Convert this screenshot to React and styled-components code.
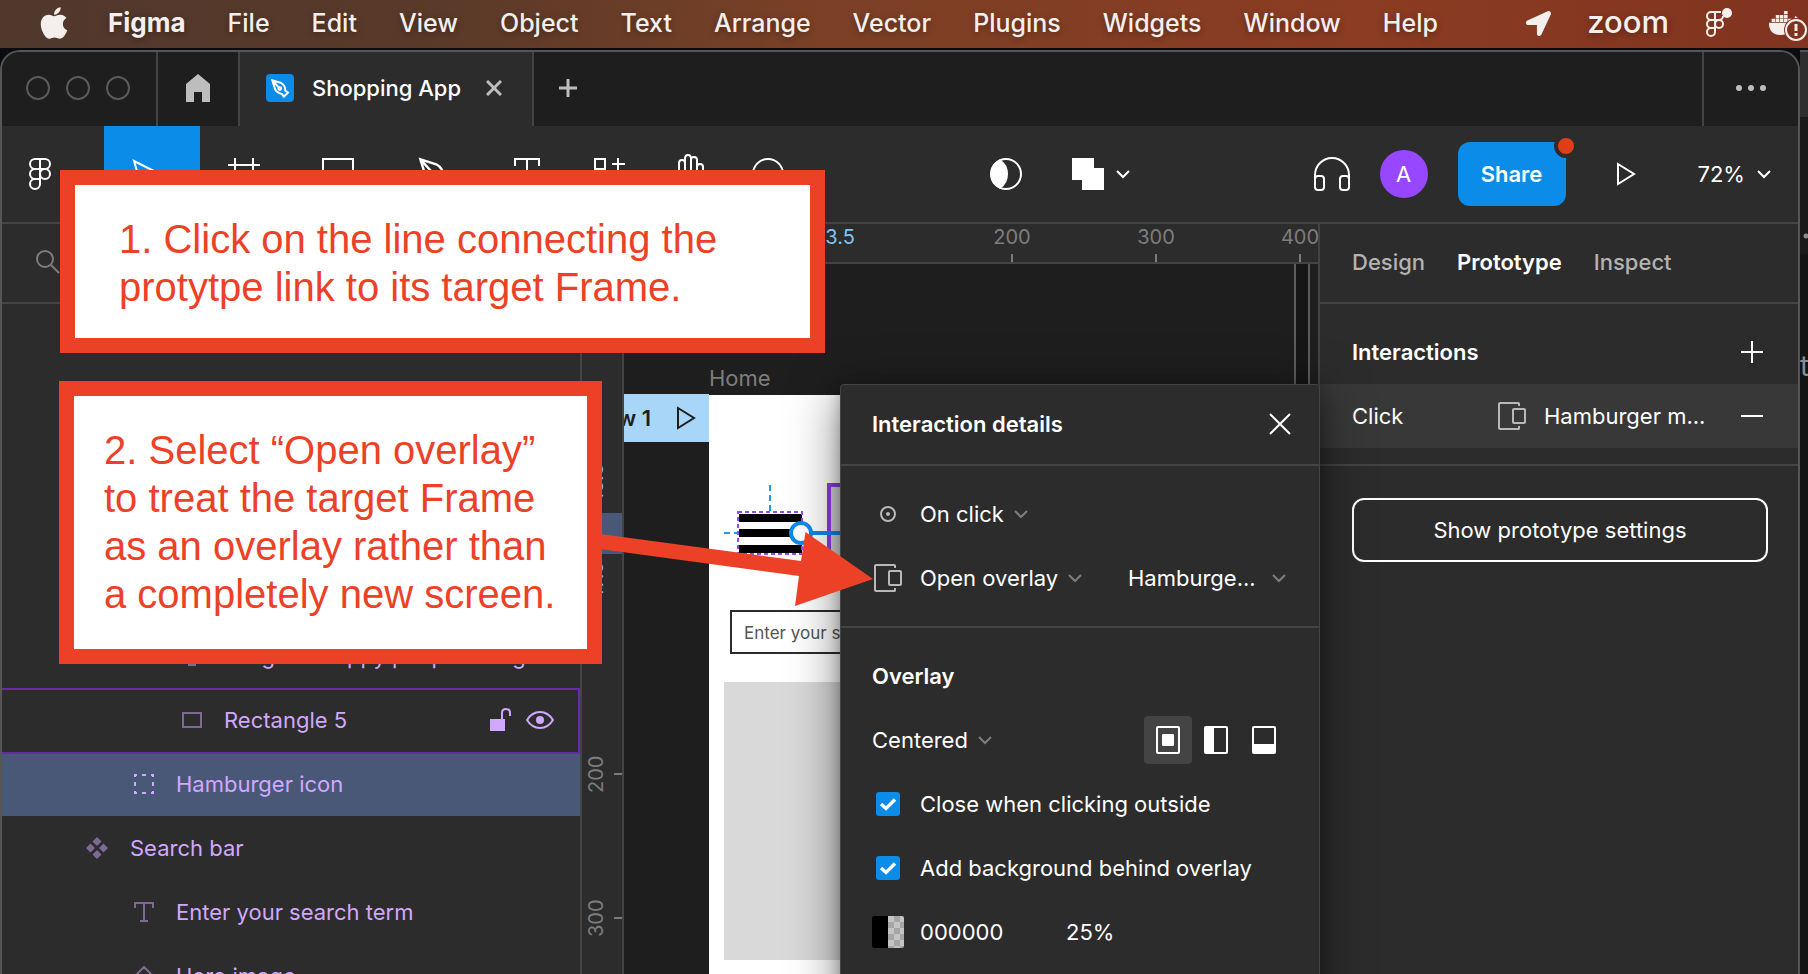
import React, { useState } from 'react';
import styled, { createGlobalStyle } from 'styled-components';
import { FaApple, FaDocker, FaLocationArrow } from 'react-icons/fa';

const GlobalStyle = createGlobalStyle`
  * {
    box-sizing: border-box;
  }

  html, body {
    margin: 0;
    height: 100%;
    overflow: hidden;
    background-color: #151515;
  }

  body, button, input, select {
    font-family: Inter, 'Liberation Sans', sans-serif;
    font-size: 22px;
    line-height: 32px;
  }

  button {
    margin: 0;
    padding: 0;
    border: 0;
    background: none;
    color: inherit;
    cursor: default;
  }

  svg {
    display: block;
    flex: none;
  }
`;

const Desktop = styled.div`
  display: flex;
  flex-direction: column;
  height: 100vh;
  position: relative;
  overflow: hidden;
  color: #fff;
`;

/* ---- mac menu bar ---- */

const MenuBar = styled.nav`
  display: flex;
  align-items: center;
  flex: none;
  height: 48px;
  padding-bottom: 2px;
  padding-left: 36px;
  background: linear-gradient(90deg, #50382d 0%, #5a3a29 25%, #7a4026 45%, #8b3c22 75%, #80331f 100%);
  color: #f4efec;
  text-shadow: 0 2px 6px rgba(0, 0, 0, 0.35);
`;

const Menus = styled.div`
  display: flex;
  gap: 42px;
  margin-left: 36px;
`;

const MenuItem = styled.button`
  font-size: ${(props) => (props.$bold ? 26 : 25)}px;
  font-weight: ${(props) => (props.$bold ? 700 : 500)};
  text-shadow: inherit;
`;

const StatusItems = styled.div`
  display: flex;
  align-items: center;
  gap: 36px;
  margin-left: auto;
`;

const ZoomMark = styled.span`
  font-size: 31px;
  font-weight: 500;
  line-height: 40px;
  padding-bottom: 2px;
`;

const DockerStatus = styled.span`
  position: relative;
  display: block;
  width: 39px;
  height: 46px;
  padding-top: 6px;
`;

const DockerAlert = styled.svg`
  position: absolute;
  left: 15px;
  bottom: 4px;
`;

/* ---- window ---- */

const Backdrop = styled.div`
  flex: 1;
  min-height: 0;
  display: flex;
  padding-top: 2px;
  background-color: #0a0c10;
`;

const Behind = styled.div`
  flex: none;
  width: 8px;
  overflow: hidden;
  padding-top: 298px;
  border-top: 2px solid #555;
  background:
    radial-gradient(circle at 6px 184px, #8c8c8c 2px, transparent 3px),
    linear-gradient(#2e2e2e 0 65px, #1a1a1a 65px 202px, #131313 202px);
  color: #8c8c8c;
  font-size: 28px;
`;

const Window = styled.div`
  flex: 1;
  min-width: 0;
  display: flex;
  flex-direction: column;
  border: 2px solid #565656;
  border-bottom: 0;
  border-radius: 20px 20px 0 0;
  overflow: hidden;
  background-color: #2c2c2c;
`;

const TabBar = styled.div`
  display: flex;
  flex: none;
  height: 74px;
  background-color: #1e1e1e;
  color: #bdbdbd;

  & > * {
    padding-bottom: 2px;
  }
`;

const TrafficLights = styled.div`
  display: flex;
  align-items: center;
  gap: 16px;
  padding-right: 26px;
  padding-left: 24px;
  border-right: 2px solid #444;
`;

const Light = styled.span`
  width: 24px;
  height: 24px;
  border: 2px solid #5a5a5a;
  border-radius: 50%;
`;

const HomeTab = styled.button`
  display: flex;
  align-items: center;
  justify-content: center;
  width: 82px;
  border-right: 2px solid #444;
`;

const FileTab = styled.div`
  display: flex;
  align-items: center;
  width: 294px;
  padding-left: 26px;
  border-right: 2px solid #444;
  background-color: #2c2c2c;
  color: #fff;
  font-weight: 500;
`;

const FileIcon = styled.span`
  display: flex;
  align-items: center;
  justify-content: center;
  width: 28px;
  height: 28px;
  margin-right: 18px;
  border-radius: 4px;
  background-color: #0c8ce9;
`;

const TabClose = styled.button`
  margin-left: 25px;
  color: #bdbdbd;
`;

const NewTab = styled.button`
  padding-left: 25px;
`;

const TabMore = styled.button`
  width: 96px;
  margin-left: auto;
  display: flex;
  align-items: center;
  justify-content: center;
  border-left: 2px solid #444;
`;

const Toolbar = styled.div`
  display: flex;
  justify-content: space-between;
  flex: none;
  height: 98px;
  border-bottom: 2px solid #444;
`;

const ToolGroup = styled.div`
  display: flex;
  align-items: center;
`;

const Tool = styled.button`
  display: flex;
  align-items: center;
  height: 96px;
  width: ${(props) => props.$width || 80}px;
  padding-left: ${(props) => props.$pad || 26}px;
  background-color: ${(props) => (props.$active ? '#0c8ce9' : 'transparent')};
  gap: 12px;
`;

const Avatar = styled.span`
  display: flex;
  align-items: center;
  justify-content: center;
  width: 48px;
  height: 48px;
  margin-right: 30px;
  border-radius: 50%;
  background-color: #9747ff;
`;

const ShareButton = styled.button`
  position: relative;
  width: 108px;
  height: 64px;
  border-radius: 12px;
  background-color: #0c8ce9;
  font-weight: 600;
`;

const ShareDot = styled.span`
  position: absolute;
  top: -8px;
  right: -12px;
  width: 24px;
  height: 24px;
  border: 4px solid #2c2c2c;
  border-radius: 50%;
  background-color: #e03e1a;
`;

const PlayButton = styled.button`
  margin: 0 62px 0 50px;
`;

const ZoomLevel = styled.button`
  display: flex;
  align-items: center;
  gap: 12px;
  padding-right: 27px;
`;

const Body = styled.div`
  display: flex;
  flex: 1;
  min-height: 0;
`;

/* ---- layers ---- */

const LayersPanel = styled.aside`
  flex: none;
  width: 580px;
  border-right: 2px solid #444;
  overflow: hidden;
`;

const SearchRow = styled.div`
  display: flex;
  align-items: center;
  height: 80px;
  padding-bottom: 2px;
  padding-left: 34px;
  border-bottom: 2px solid #444;
`;

const LayerList = styled.div`
  padding-top: 320px;
`;

const LayerRow = styled.div`
  display: flex;
  align-items: center;
  position: relative;
  height: 64px;
  padding-right: 26px;
  padding-left: ${(props) => 36 + props.$depth * 48}px;
  background-color: ${(props) => (props.$selected ? '#4a5878' : 'transparent')};
  color: #d1a8ff;

  & > svg {
    margin-right: 22px;
    opacity: ${(props) => (props.$selected ? 1 : 0.5)};
  }
`;

const HoverOutline = styled.span`
  position: absolute;
  inset: 0 0 -2px 0;
  z-index: 1;
  border: 2px solid #652ca8;
  border-left: 0;
`;

const LayerName = styled.span`
  flex: 1;
  min-width: 0;
  overflow: hidden;
  white-space: nowrap;
`;

const LayerActions = styled.span`
  display: flex;
  align-items: center;
  gap: 14px;
`;

/* ---- canvas ---- */

const CanvasArea = styled.main`
  flex: 1;
  min-width: 0;
  display: grid;
  grid-template-columns: 42px 1fr;
  grid-template-rows: 40px 1fr;
  font-size: 20px;
`;

const RulerTop = styled.div`
  grid-column: 1 / 3;
  position: relative;
  overflow: hidden;
  border-bottom: 2px solid #444;
`;

const RulerLeft = styled.div`
  position: relative;
  overflow: hidden;
  border-right: 2px solid #444;
`;

const TopMark = styled.span`
  position: absolute;
  left: ${(props) => props.$at - 40}px;
  width: 80px;
  height: 38px;
  line-height: 26px;
  text-align: center;
  color: ${(props) => (props.$blue ? '#7cc4f8' : '#7d7d7d')};

  &::after {
    content: '';
    display: ${(props) => (props.$blue ? 'none' : 'block')};
    position: absolute;
    left: 39px;
    bottom: 0;
    width: 2px;
    height: 8px;
    background-color: #7d7d7d;
  }
`;

const LeftMark = styled.span`
  position: absolute;
  top: ${(props) => props.$at - 40}px;
  left: 0;
  width: 40px;
  height: 80px;
  line-height: 28px;
  writing-mode: vertical-rl;
  transform: rotate(180deg);
  text-align: center;
  color: ${(props) => (props.$blue ? '#7cc4f8' : '#7d7d7d')};

  &::after {
    content: '';
    display: ${(props) => (props.$blue ? 'none' : 'block')};
    position: absolute;
    top: 39px;
    left: 0;
    width: 8px;
    height: 2px;
    background-color: #7d7d7d;
  }
`;

const RulerRange = styled.span`
  position: absolute;
  top: 249px;
  left: 0;
  width: 40px;
  height: 41px;
  background-color: #4a5878;
`;

const Canvas = styled.div`
  position: relative;
  overflow: hidden;
  background-color: #1e1e1e;
`;

const FrameName = styled.span`
  position: absolute;
  left: 85px;
  top: 98px;
  color: #7d7d7d;
  font-size: 22px;
`;

const FlowTag = styled.div`
  position: absolute;
  right: calc(100% - 85px);
  top: 130px;
  display: flex;
  align-items: center;
  gap: 25px;
  height: 48px;
  padding-right: 13px;
  background-color: #a8d6f9;
  color: #1e1e1e;
  font-size: 22px;
  font-weight: 600;
  white-space: nowrap;
`;

const HomeFrame = styled.section`
  position: absolute;
  left: 85px;
  top: 131px;
  width: 540px;
  bottom: 0;
  background-color: #fff;
`;

const SearchBox = styled.input`
  position: absolute;
  left: 21px;
  top: 215px;
  width: 500px;
  height: 44px;
  padding: 2px 12px 0;
  border: 2px solid #2c2c2c;
  background: #fff;
  font-size: 17px;

  &::placeholder {
    color: #555;
    opacity: 1;
  }
`;

const HeroImage = styled.div`
  position: absolute;
  left: 15px;
  top: 287px;
  width: 500px;
  height: 278px;
  background-color: #d9d9d9;
`;

const LinkTarget = styled.div`
  position: absolute;
  left: 118px;
  top: 88px;
  width: 300px;
  height: 80px;
  border: 4px solid #8a3ee8;
  background-color: #d9d9d9;
`;

const HamburgerLayer = styled.svg`
  position: absolute;
  left: 13px;
  top: 87px;
`;

const OtherFrame = styled.div`
  position: absolute;
  right: 8px;
  top: 0;
  bottom: 0;
  width: 16px;
  border: solid #5c5c5c;
  border-width: 0 2px;
  background-color: #161616;
`;

/* ---- right panel ---- */

const RightPanel = styled.aside`
  position: relative;
  flex: none;
  width: 480px;
  border-left: 2px solid #444;
  background-color: #2c2c2c;
`;

const PanelTabs = styled.div`
  display: flex;
  align-items: center;
  gap: 32px;
  height: 80px;
  padding-bottom: 2px;
  padding-left: 32px;
  border-bottom: 2px solid #444;
`;

const PanelTab = styled.button`
  color: ${(props) => (props.$active ? '#fff' : '#b3b3b3')};
  font-weight: ${(props) => (props.$active ? 600 : 500)};
`;

const Section = styled.section`
  padding: 16px 0;
  border-bottom: ${(props) => (props.$last ? 0 : 2)}px solid #444;
`;

const Row = styled.div`
  display: flex;
  align-items: center;
  height: 64px;
  padding: 0 35px 0 32px;
  background-color: ${(props) => (props.$hover ? '#383838' : 'transparent')};
`;

const SectionTitle = styled.h2`
  flex: 1;
  margin: 0;
  font-size: 22px;
  font-weight: 600;
  line-height: 32px;
`;

const Trigger = styled.span`
  width: 146px;
`;

const Destination = styled.span`
  flex: 1;
  margin-left: 18px;
`;

const SettingsButton = styled.button`
  display: block;
  width: calc(100% - 62px);
  height: 64px;
  margin: 32px 30px 0 32px;
  border: 2px solid #fff;
  border-radius: 12px;
`;

const Popover = styled.div`
  position: absolute;
  right: 478px;
  top: 160px;
  z-index: 2;
  width: 480px;
  height: 700px;
  border: 1px solid #444;
  border-radius: 4px 4px 0 0;
  background-color: #2c2c2c;
  box-shadow: 0 10px 50px rgba(0, 0, 0, 0.5), 0 4px 14px rgba(0, 0, 0, 0.25);
`;

const PopoverHeader = styled.header`
  display: flex;
  align-items: center;
  height: 81px;
  padding: 0 28px 2px 31px;
  border-bottom: 2px solid #444;
`;

const PopoverRow = styled(Row)`
  padding: 0 31px;
`;

const IconCell = styled.span`
  display: flex;
  align-items: center;
  justify-content: center;
  flex: none;
  width: 32px;
  margin-right: 16px;
`;

const SelectWrap = styled.label`
  display: flex;
  align-items: center;
  gap: 10px;
`;

const TargetSelect = styled(SelectWrap)`
  justify-content: space-between;
  width: 158px;
  margin-right: 2px;
  margin-left: auto;
`;

const Select = styled.select`
  appearance: none;
  field-sizing: content;
  padding: 0;
  border: 0;
  background: transparent;
  color: #fff;
`;

const Positions = styled.div`
  display: flex;
  margin-left: auto;
`;

const PositionButton = styled.button`
  display: flex;
  align-items: center;
  justify-content: center;
  width: 48px;
  height: 48px;
  border-radius: 4px;
  background-color: ${(props) => (props.$active ? '#444' : 'transparent')};
`;

const CheckLabel = styled.label`
  display: flex;
  align-items: center;
`;

const Checkbox = styled.input`
  appearance: none;
  width: 24px;
  height: 24px;
  margin: 0 20px 0 4px;
  border-radius: 3px;
  background-color: #0c8ce9;

  &:checked {
    background-image: url("data:image/svg+xml,%3Csvg xmlns='http://www.w3.org/2000/svg' width='24' height='24' fill='none' stroke='white' stroke-width='3.4'%3E%3Cpath d='M5 12l5 4.500L19 7.500'/%3E%3C/svg%3E");
  }
`;

const Swatch = styled.span`
  flex: none;
  width: 32px;
  height: 32px;
  margin-right: 16px;
  border-radius: 2px;
  background:
    linear-gradient(90deg, #000 50%, transparent 50%),
    repeating-conic-gradient(#a6a6a6 0 25%, #c4c4c4 0 50%) 4px 0 / 12px 12px;
`;

const ColorInput = styled.input`
  width: ${(props) => props.$width}px;
  padding: 0;
  border: 0;
  background: none;
  color: #fff;
`;

/* ---- tutorial notes on top ---- */

const Callout = styled.div`
  position: absolute;
  left: ${(props) => props.$left}px;
  top: ${(props) => props.$top}px;
  width: ${(props) => props.$width}px;
  padding: ${(props) => props.$pad};
  border: 15px solid #ec4127;
  background-color: #fff;
  color: #ec4127;
  font-family: 'Liberation Sans', Arial, sans-serif;
  font-size: 40px;
  line-height: 48px;
  white-space: pre;
  z-index: 5;
`;

const Arrow = styled.svg`
  position: absolute;
  left: 600px;
  top: 520px;
  z-index: 6;
`;

/* ---- icons ---- */

const Icon = ({ w, h, stroke = 2, children, ...rest }) => (
  <svg
    width={w}
    height={h}
    viewBox={`0 0 ${w} ${h}`}
    fill="none"
    stroke="currentColor"
    strokeWidth={stroke}
    aria-hidden="true"
    {...rest}
  >
    {children}
  </svg>
);

const SolidIcon = (props) => <Icon {...props} fill="currentColor" stroke={0} />;

const Chevron = ({ color = '#fff' }) => (
  <Icon w={14} h={9} color={color}>
    <path d="M1 1l6 6 6-6" />
  </Icon>
);

const FigmaIcon = () => (
  <Icon w={22} h={32}>
    <path d="M11 1H6a5 5 0 0 0 0 10h5zM11 1h5a5 5 0 0 1 0 10h-5M11 11H6a5 5 0 0 0 0 10h5zM11 21H6a5 5 0 1 0 5 5zM11 11v10" />
    <circle cx="16" cy="16" r="5" />
  </Icon>
);

const OverlayIcon = () => (
  <Icon w={28} h={28} color="#b8b8b8">
    <path d="M21 4V1.500Q21 1 20 1H2Q1 1 1 2v24q0 1 1 1h18q1 0 1-.5V24" />
    <rect x="15" y="7" width="12" height="14" rx="1" />
  </Icon>
);

const PenNib = ({ size = 20, stroke = 2 }) => (
  <svg width={size} height={size} viewBox="0 0 28 28" fill="none" stroke="currentColor" strokeWidth={stroke}>
    <path d="M2 2l4 13q2 5 10 7l3 4 6-6-4-3q0-8-6-11zM2 2l10 11" />
    <circle cx="13" cy="14" r="2" />
  </svg>
);

const TypeIcon = () => (
  <Icon w={20} h={20}>
    <path d="M1 6V1h18v5M10 1v18M6 19h8" />
  </Icon>
);

const layers = [
  { name: 'Image of happy people using a', depth: 3, icon: <TypeIcon /> },
  {
    name: 'Rectangle 5',
    depth: 3,
    hover: true,
    icon: (
      <Icon w={20} h={16}>
        <rect x="1" y="1" width="18" height="14" />
      </Icon>
    ),
  },
  {
    name: 'Hamburger icon',
    depth: 2,
    selected: true,
    icon: (
      <Icon w={20} h={20}>
        <path d="M0 1h3M8 1h4M17 1h3M0 19h3M8 19h4M17 19h3M1 0v3M1 8v4M1 17v3M19 0v3M19 8v4M19 17v3" />
      </Icon>
    ),
  },
  {
    name: 'Search bar',
    depth: 1,
    icon: (
      <SolidIcon w={22} h={22}>
        <path d="M11 0l4.500 4.500L11 9 6.500 4.500zM11 13l4.500 4.500L11 22l-4.500-4.500zM4.500 6.500L9 11l-4.500 4.500L0 11zM17.500 6.500L22 11l-4.500 4.500L13 11z" />
      </SolidIcon>
    ),
  },
  { name: 'Enter your search term', depth: 2, icon: <TypeIcon /> },
  {
    name: 'Hero image',
    depth: 2,
    icon: (
      <Icon w={20} h={20}>
        <path d="M10 1l9 9-9 9-9-9z" />
      </Icon>
    ),
  },
];

const menuItems = ['File', 'Edit', 'View', 'Object', 'Text', 'Arrange', 'Vector', 'Plugins', 'Widgets', 'Window', 'Help'];

const MacMenu = () => (
  <MenuBar>
    <FaApple size={36} />
    <Menus>
      <MenuItem $bold>Figma</MenuItem>
      {menuItems.map((item) => (
        <MenuItem key={item}>{item}</MenuItem>
      ))}
    </Menus>
    <StatusItems>
      <FaLocationArrow size={25} />
      <ZoomMark>zoom</ZoomMark>
      <Icon w={28} h={32}>
        <path d="M10 5H6a4 4 0 0 0 0 8h4zM10 5v8M10 5h6M10 13h4a4 4 0 0 0 4-4M10 13H6a4 4 0 0 0 0 8h4zM10 21H6a4 4 0 1 0 4 4zM10 13v8" />
        <circle cx="14" cy="17" r="4" />
        <circle cx="22" cy="6" r="5" fill="currentColor" stroke="none" />
      </Icon>
      <DockerStatus>
        <FaDocker size={34} />
        <DockerAlert width="24" height="24" viewBox="0 0 24 24">
          <circle cx="12" cy="12" r="12" fill="#80331f" />
          <circle cx="12" cy="12" r="10" fill="none" stroke="currentColor" strokeWidth="2" />
          <path d="M12 6v7M12 15v3" stroke="currentColor" strokeWidth="3" />
        </DockerAlert>
      </DockerStatus>
    </StatusItems>
  </MenuBar>
);

const Tabs = () => (
  <TabBar>
    <TrafficLights>
      <Light />
      <Light />
      <Light />
    </TrafficLights>
    <HomeTab aria-label="Home">
      <SolidIcon w={24} h={28}>
        <path d="M12 0l12 10v18h-8V18H8v10H0V10z" />
      </SolidIcon>
    </HomeTab>
    <FileTab>
      <FileIcon>
        <PenNib size={19} stroke={3} />
      </FileIcon>
      Shopping App
      <TabClose aria-label="Close tab">
        <Icon w={16} h={16} stroke={3}>
          <path d="M1 1l14 14M15 1L1 15" />
        </Icon>
      </TabClose>
    </FileTab>
    <NewTab aria-label="New tab">
      <Icon w={18} h={18} stroke={3}>
        <path d="M9 0v18M0 9h18" />
      </Icon>
    </NewTab>
    <TabMore aria-label="More">
      <SolidIcon w={30} h={6}>
        <circle cx="3" cy="3" r="3" />
        <circle cx="15" cy="3" r="3" />
        <circle cx="27" cy="3" r="3" />
      </SolidIcon>
    </TabMore>
  </TabBar>
);

const Tools = () => (
  <Toolbar>
    <ToolGroup>
      <Tool $width={102} $pad={27} aria-label="Menu">
        <FigmaIcon />
      </Tool>
      <Tool $width={96} $pad={28} $active aria-label="Move">
        <Icon w={28} h={30}>
          <path d="M2 2l22 11-10 3-5 10z" />
        </Icon>
      </Tool>
      <Tool $width={96} $pad={28} aria-label="Frame">
        <Icon w={32} h={32}>
          <path d="M7 0v32M25 0v32M0 7h32M0 25h32" />
        </Icon>
      </Tool>
      <Tool $width={96} aria-label="Rectangle">
        <Icon w={32} h={32}>
          <rect x="1" y="1" width="30" height="30" />
        </Icon>
      </Tool>
      <Tool $width={96} aria-label="Pen">
        <PenNib size={34} />
      </Tool>
      <Tool aria-label="Text">
        <Icon w={26} h={32}>
          <path d="M1 8V1h24v7M13 1v30M9 31h8" />
        </Icon>
      </Tool>
      <Tool aria-label="Resources">
        <Icon w={32} h={32}>
          <path d="M1 1h10v10H1zM1 21h10v10H1zM21 21h10v10H21zM24 0v13M18 6h13" />
        </Icon>
      </Tool>
      <Tool $pad={30} aria-label="Hand">
        <Icon w={28} h={40}>
          <path d="M1 26V9q0-3 3-3t3 3v11M7 20V5q0-4 3-4t3 4v14M13 18V6q0-3 3-3t3 3v13M19 13q0-3 3-3t3 3v12q0 12-11 12" />
        </Icon>
      </Tool>
      <Tool $pad={24} aria-label="Comment">
        <Icon w={32} h={32}>
          <circle cx="16" cy="16" r="15" />
        </Icon>
      </Tool>
    </ToolGroup>

    <ToolGroup>
      <Tool $pad={24} aria-label="Mask">
        <Icon w={32} h={32}>
          <circle cx="16" cy="16" r="15" />
          <path d="M10 2.500A15 15 0 0 0 10 29.500Q17 25 17 16T10 2.500z" fill="currentColor" />
        </Icon>
      </Tool>
      <Tool $width={92} aria-label="Union">
        <SolidIcon w={32} h={32}>
          <path d="M0 0h22v10h10v22H10V22H0z" />
        </SolidIcon>
        <Chevron />
      </Tool>
    </ToolGroup>

    <ToolGroup>
      <Tool $width={84} $pad={18} aria-label="Audio">
        <Icon w={36} h={34}>
          <path d="M1 24v-6a17 17 0 0 1 34 0v6" />
          <rect x="1" y="19" width="9" height="14" rx="3" />
          <rect x="26" y="19" width="9" height="14" rx="3" />
        </Icon>
      </Tool>
      <Avatar>A</Avatar>
      <ShareButton>
        Share
        <ShareDot />
      </ShareButton>
      <PlayButton aria-label="Present">
        <Icon w={20} h={24}>
          <path d="M2 2l16 10L2 22z" />
        </Icon>
      </PlayButton>
      <ZoomLevel>
        72%
        <Chevron />
      </ZoomLevel>
    </ToolGroup>
  </Toolbar>
);

const Layers = () => (
  <LayersPanel>
    <SearchRow>
      <Icon w={24} h={24} color="#7d7d7d">
        <circle cx="9" cy="9" r="8" />
        <path d="M15 15l8 8" />
      </Icon>
    </SearchRow>
    <LayerList>
      {layers.map((layer) => (
        <LayerRow key={layer.name} $depth={layer.depth} $selected={layer.selected}>
          {layer.hover && <HoverOutline />}
          {layer.icon}
          <LayerName>{layer.name}</LayerName>
          {layer.hover && (
            <LayerActions>
              <Icon w={22} h={24}>
                <rect x="0" y="11" width="15" height="12" fill="currentColor" stroke="none" />
                <path d="M12 11V5q0-4 4-4t4 4v3" />
              </Icon>
              <Icon w={28} h={18}>
                <path d="M1 9q5-8 13-8t13 8q-5 8-13 8T1 9z" />
                <circle cx="14" cy="9" r="4" fill="currentColor" stroke="none" />
              </Icon>
            </LayerActions>
          )}
        </LayerRow>
      ))}
    </LayerList>
  </LayersPanel>
);

const Board = () => (
  <CanvasArea>
    <RulerTop>
      <TopMark $at={252} $blue>53.5</TopMark>
      <TopMark $at={430}>200</TopMark>
      <TopMark $at={574}>300</TopMark>
      <TopMark $at={718}>400</TopMark>
    </RulerTop>
    <RulerLeft>
      <LeftMark $at={218} $blue>18.5</LeftMark>
      <RulerRange />
      <LeftMark $at={317} $blue>47.5</LeftMark>
      <LeftMark $at={510}>200</LeftMark>
      <LeftMark $at={654}>300</LeftMark>
    </RulerLeft>
    <Canvas>
      <FrameName>Home</FrameName>
      <HomeFrame>
        <LinkTarget />
        <HamburgerLayer width="130" height="76" fill="none">
          <path d="M48 3v28M2 51h14" stroke="#1b9bf5" strokeWidth="2" strokeDasharray="6 4" />
          <path d="M17 36h63M17 51h63M17 67h63" stroke="#000" strokeWidth="8" />
          <rect x="16" y="30" width="64" height="42" stroke="#9747ff" strokeWidth="2" strokeDasharray="4 3" />
          <path d="M80 51h50" stroke="#0c8ce9" strokeWidth="4" />
          <circle cx="79" cy="51" r="10" fill="#fff" stroke="#0c8ce9" strokeWidth="4" />
        </HamburgerLayer>
        <SearchBox placeholder="Enter your search term" aria-label="Search term" />
        <HeroImage />
      </HomeFrame>
      <FlowTag>
        Flow 1
        <Icon w={20} h={24}>
          <path d="M2 2l16 10L2 22z" />
        </Icon>
      </FlowTag>
      <OtherFrame />
    </Canvas>
  </CanvasArea>
);

const InteractionDetails = () => {
  const [position, setPosition] = useState('center');
  const [closeOutside, setCloseOutside] = useState(true);
  const [background, setBackground] = useState(true);

  return (
    <Popover>
      <PopoverHeader>
        <SectionTitle>Interaction details</SectionTitle>
        <button aria-label="Close">
          <Icon w={22} h={22}>
            <path d="M1 1l20 20M21 1L1 21" />
          </Icon>
        </button>
      </PopoverHeader>
      <Section>
        <PopoverRow>
          <IconCell>
            <Icon w={16} h={16} color="#b8b8b8">
              <circle cx="8" cy="8" r="7" />
              <circle cx="8" cy="8" r="2" fill="currentColor" stroke="none" />
            </Icon>
          </IconCell>
          <SelectWrap>
            <Select aria-label="Trigger">
              <option>On click</option>
            </Select>
            <Chevron color="#7d7d7d" />
          </SelectWrap>
        </PopoverRow>
        <PopoverRow>
          <IconCell>
            <OverlayIcon />
          </IconCell>
          <SelectWrap>
            <Select aria-label="Action">
              <option>Open overlay</option>
            </Select>
            <Chevron color="#7d7d7d" />
          </SelectWrap>
          <TargetSelect>
            <Select aria-label="Destination">
              <option>Hamburge...</option>
            </Select>
            <Chevron color="#7d7d7d" />
          </TargetSelect>
        </PopoverRow>
      </Section>
      <Section $last>
        <PopoverRow>
          <SectionTitle>Overlay</SectionTitle>
        </PopoverRow>
        <PopoverRow>
          <SelectWrap>
            <Select aria-label="Overlay position">
              <option>Centered</option>
            </Select>
            <Chevron color="#7d7d7d" />
          </SelectWrap>
          <Positions>
            <PositionButton $active={position === 'center'} onClick={() => setPosition('center')} aria-label="Center">
              <Icon w={24} h={28}>
                <rect x="1" y="1" width="22" height="26" rx="1" />
                <rect x="6" y="8" width="12" height="12" rx="1" fill="currentColor" stroke="none" />
              </Icon>
            </PositionButton>
            <PositionButton $active={position === 'left'} onClick={() => setPosition('left')} aria-label="Left">
              <Icon w={24} h={28}>
                <rect x="1" y="1" width="22" height="26" rx="1" />
                <path d="M1 1h9v26H1z" fill="currentColor" stroke="none" />
              </Icon>
            </PositionButton>
            <PositionButton $active={position === 'bottom'} onClick={() => setPosition('bottom')} aria-label="Bottom">
              <Icon w={24} h={28}>
                <rect x="1" y="1" width="22" height="26" rx="1" />
                <path d="M1 18h22v9H1z" fill="currentColor" stroke="none" />
              </Icon>
            </PositionButton>
          </Positions>
        </PopoverRow>
        <PopoverRow>
          <CheckLabel>
            <Checkbox type="checkbox" checked={closeOutside} onChange={() => setCloseOutside(!closeOutside)} />
            Close when clicking outside
          </CheckLabel>
        </PopoverRow>
        <PopoverRow>
          <CheckLabel>
            <Checkbox type="checkbox" checked={background} onChange={() => setBackground(!background)} />
            Add background behind overlay
          </CheckLabel>
        </PopoverRow>
        <PopoverRow>
          <Swatch />
          <ColorInput $width={146} defaultValue="000000" aria-label="Background color" />
          <ColorInput $width={80} defaultValue="25%" aria-label="Background opacity" />
        </PopoverRow>
      </Section>
    </Popover>
  );
};

const PrototypePanel = () => (
  <RightPanel>
    <PanelTabs>
      <PanelTab>Design</PanelTab>
      <PanelTab $active>Prototype</PanelTab>
      <PanelTab>Inspect</PanelTab>
    </PanelTabs>
    <Section>
      <Row>
        <SectionTitle>Interactions</SectionTitle>
        <button aria-label="Add interaction">
          <Icon w={22} h={22}>
            <path d="M11 0v22M0 11h22" />
          </Icon>
        </button>
      </Row>
      <Row $hover>
        <Trigger>Click</Trigger>
        <OverlayIcon />
        <Destination>Hamburger m...</Destination>
        <button aria-label="Remove interaction">
          <Icon w={22} h={22}>
            <path d="M0 11h22" />
          </Icon>
        </button>
      </Row>
    </Section>
    <SettingsButton>Show prototype settings</SettingsButton>
    <InteractionDetails />
  </RightPanel>
);

const App = () => (
  <Desktop>
    <GlobalStyle />
    <MacMenu />
    <Backdrop>
      <Window>
        <Tabs />
        <Tools />
        <Body>
          <Layers />
          <Board />
          <PrototypePanel />
        </Body>
      </Window>
      <Behind>t</Behind>
    </Backdrop>
    <Callout $left={60} $top={170} $width={765} $pad="30px 44px 27px">
      {'1. Click on the line connecting the\nprotytpe link to its target Frame.'}
    </Callout>
    <Callout $left={59} $top={381} $width={543} $pad="30px 30px 31px">
      {'2. Select “Open overlay”\nto treat the target Frame\nas an overlay rather than\na completely new screen.'}
    </Callout>
    <Arrow width="280" height="100" fill="#ec4127">
      <path d="M0 14l201 27 4.500-29L273 59l-78 27 4-30L0 29z" />
    </Arrow>
  </Desktop>
);

export default App;
